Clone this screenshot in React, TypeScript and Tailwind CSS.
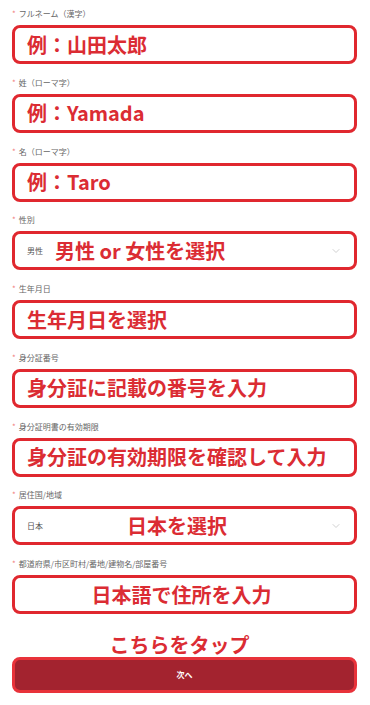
import { ChevronDown } from "lucide-react";

const font = { fontFamily: '"Noto Sans CJK JP", "Noto Sans", sans-serif' };

type Field = {
  label: string;
  big: string;
  small?: string;
  select?: boolean;
  align?: "left" | "center" | "after";
};

const fields: Field[] = [
  { label: "フルネーム（漢字）", big: "例：山田太郎" },
  { label: "姓（ローマ字）", big: "例：Yamada" },
  { label: "名（ローマ字）", big: "例：Taro" },
  { label: "性別", big: "男性 or 女性を選択", small: "男性", select: true, align: "after" },
  { label: "生年月日", big: "生年月日を選択" },
  { label: "身分証番号", big: "身分証に記載の番号を入力" },
  { label: "身分証明書の有効期限", big: "身分証の有効期限を確認して入力" },
  { label: "居住国/地域", big: "日本を選択", small: "日本", select: true, align: "center" },
  { label: "都道府県/市区町村/番地/建物名/部屋番号", big: "日本語で住所を入力", align: "center" },
];

function FieldRow({ field }: { field: Field }) {
  return (
    <div className="flex flex-col">
      <div className="flex h-[14px] items-center text-[8px] leading-[14px] text-[#666]">
        <span className="mr-[3px] text-[#f27c7c]">*</span>
        <span>{field.label}</span>
      </div>
      <div className="mt-[4px] flex h-[39px] items-center rounded-[8px] border-[3px] border-[#e0282f] bg-white px-[12px]">
        {field.small && (
          <span className="w-[16px] shrink-0 text-[8px] text-[#555]">{field.small}</span>
        )}
        {field.align === "center" && !field.small ? (
          <span className="flex-1 pr-[6px] text-center text-[20px] font-bold leading-[26px] text-[#db2c33]">
            {field.big}
          </span>
        ) : (
          <span
            className={
              "text-[20px] font-bold leading-[26px] text-[#db2c33] " +
              (field.align === "center" ? "ml-[84px]" : field.align === "after" ? "ml-[12px]" : "")
            }
          >
            {field.big}
          </span>
        )}
        {field.select && (
          <ChevronDown className="ml-auto h-[12px] w-[12px] text-[#c0c0c0]" strokeWidth={1.5} />
        )}
      </div>
    </div>
  );
}

export default function App() {
  return (
    <div className="min-h-[705px] w-[370px] bg-white px-[12px] pt-[7px]" style={font}>
      <div className="flex w-[345px] flex-col gap-[11.75px]">
        {fields.map((f) => (
          <FieldRow key={f.label} field={f} />
        ))}
      </div>

      <div className="mt-[19px] w-[345px] pr-[10px] text-center text-[20px] font-bold leading-[24px] text-[#db2c33]">
        こちらをタップ
      </div>

      <button className="flex h-[36px] w-[345px] items-center justify-center rounded-[8px] border-[3px] border-[#e8323a] bg-[#a3232f] text-[8px] font-bold text-white">
        次へ
      </button>
    </div>
  );
}
